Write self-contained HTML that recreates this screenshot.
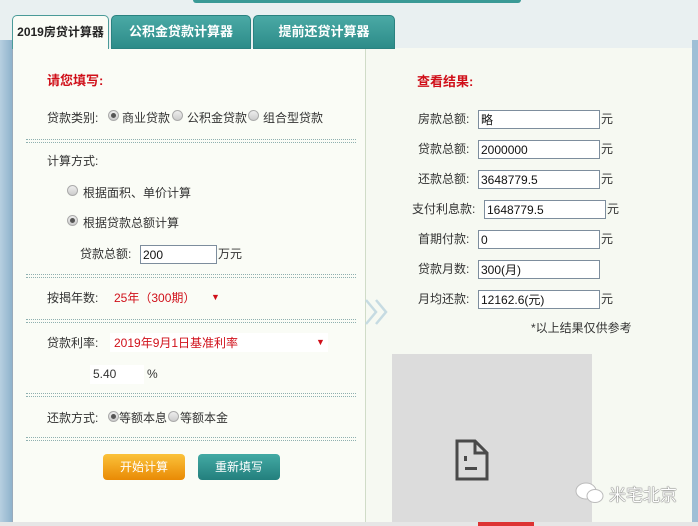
<!DOCTYPE html>
<html><head><meta charset="utf-8"><style>
*{margin:0;padding:0;box-sizing:border-box}
body{width:698px;height:526px;overflow:hidden;background:#e9f0f1;font-family:"Liberation Sans","Noto Sans CJK SC",sans-serif;font-size:12px;color:#333;position:relative}
.a{position:absolute}
.tab{position:absolute;top:15px;height:34px;border-radius:5px 5px 0 0;text-align:center;line-height:32px;font-weight:bold;font-size:13px}
.t2{background:linear-gradient(#4aa9a5,#2d8c89);color:#fff;border:1px solid #2a8280}
.lbl{position:absolute;white-space:nowrap;line-height:14px}
.dot{position:absolute;left:26px;width:330px;height:4px;border-top:1px dotted #8fb0b0;border-bottom:1px dotted #8fb0b0}
.rad{position:absolute;width:11px;height:11px;border-radius:50%;border:1px solid #aaa;background:linear-gradient(#eee,#ccc)}
.rad.on::after{content:"";position:absolute;left:2px;top:2px;width:5px;height:5px;border-radius:50%;background:#555}
.in{position:absolute;height:19px;border:1px solid #7d8d9d;background:#fff;padding-left:2px;padding-top:2px;line-height:14px;color:#111}
.red{color:#d0101a}
</style></head><body>
<div class="a" style="left:193px;top:0;width:328px;height:3px;background:#3a9a96;border-radius:0 0 4px 4px"></div>
<div class="a" style="left:0;top:40px;width:12px;height:486px;background:linear-gradient(90deg,#b7cfe0,#8fb3cc)"></div>
<div class="a" style="left:692px;top:40px;width:6px;height:486px;background:#9fbfd6"></div>
<div class="a" style="left:12px;top:48px;width:353px;height:474px;background:#fafcf6;border-left:1px solid #9ab"></div>
<div class="a" style="left:365px;top:48px;width:327px;height:474px;background:#f6f9f2;border-left:1px solid #d0dcc8"></div>
<div class="tab" style="left:12px;width:97px;background:#fafcf6;border:1px solid #4a9a98;border-bottom:none;color:#222;font-size:12px">2019房贷计算器</div>
<div class="tab t2" style="left:111px;width:140px">公积金贷款计算器</div>
<div class="tab t2" style="left:253px;width:142px">提前还贷计算器</div>

<div class="lbl red" style="left:47px;top:74px;font-weight:bold;font-size:13px">请您填写:</div>
<div class="lbl" style="left:47px;top:111px">贷款类别:</div>
<div class="rad on" style="left:108px;top:110px"></div><div class="lbl" style="left:122px;top:111px">商业贷款</div>
<div class="rad" style="left:172px;top:110px"></div><div class="lbl" style="left:187px;top:111px">公积金贷款</div>
<div class="rad" style="left:248px;top:110px"></div><div class="lbl" style="left:263px;top:111px">组合型贷款</div>
<div class="dot" style="top:139px"></div>
<div class="lbl" style="left:47px;top:154px">计算方式:</div>
<div class="rad" style="left:67px;top:185px"></div><div class="lbl" style="left:83px;top:186px">根据面积、单价计算</div>
<div class="rad on" style="left:67px;top:215px"></div><div class="lbl" style="left:83px;top:216px">根据贷款总额计算</div>
<div class="lbl" style="left:80px;top:247px">贷款总额:</div>
<div class="in" style="left:140px;top:245px;width:77px">200</div>
<div class="lbl" style="left:218px;top:247px">万元</div>
<div class="dot" style="top:274px"></div>
<div class="lbl" style="left:47px;top:291px">按揭年数:</div>
<div class="lbl red" style="left:114px;top:291px">25年（300期）</div>
<div class="lbl red" style="left:211px;top:290px;font-size:9px">▼</div>
<div class="dot" style="top:319px"></div>
<div class="lbl" style="left:47px;top:336px">贷款利率:</div>
<div class="a" style="left:110px;top:333px;width:218px;height:19px;background:#fff"></div>
<div class="lbl red" style="left:114px;top:336px">2019年9月1日基准利率</div>
<div class="lbl red" style="left:316px;top:335px;font-size:9px">▼</div>
<div class="a" style="left:90px;top:365px;width:54px;height:19px;background:#fff"></div>
<div class="lbl" style="left:93px;top:367px">5.40</div>
<div class="lbl" style="left:147px;top:367px">%</div>
<div class="dot" style="top:393px"></div>
<div class="lbl" style="left:47px;top:411px">还款方式:</div>
<div class="rad on" style="left:108px;top:411px"></div><div class="lbl" style="left:119px;top:411px">等额本息</div>
<div class="rad" style="left:168px;top:411px"></div><div class="lbl" style="left:180px;top:411px">等额本金</div>
<div class="dot" style="top:437px"></div>
<div class="a" style="left:103px;top:454px;width:82px;height:26px;border-radius:4px;background:linear-gradient(#fbc23a,#e98a05);color:#fff;text-align:center;line-height:26px">开始计算</div>
<div class="a" style="left:198px;top:454px;width:82px;height:26px;border-radius:4px;background:linear-gradient(#43aaa4,#237f7d);color:#fff;text-align:center;line-height:26px">重新填写</div>

<svg class="a" style="left:362px;top:297px" width="32" height="30"><path d="M4 3 L14 15 L4 27 M14 3 L24 15 L14 27" fill="none" stroke="#c6dbe2" stroke-width="2.5"/></svg>

<div class="lbl red" style="left:417px;top:75px;font-weight:bold;font-size:13px">查看结果:</div>
<div class="lbl" style="left:418px;top:112px">房款总额:</div><div class="in" style="left:478px;top:110px;width:122px">略</div><div class="lbl" style="left:601px;top:112px">元</div>
<div class="lbl" style="left:418px;top:142px">贷款总额:</div><div class="in" style="left:478px;top:140px;width:122px">2000000</div><div class="lbl" style="left:601px;top:142px">元</div>
<div class="lbl" style="left:418px;top:172px">还款总额:</div><div class="in" style="left:478px;top:170px;width:122px">3648779.5</div><div class="lbl" style="left:601px;top:172px">元</div>
<div class="lbl" style="left:412px;top:202px">支付利息款:</div><div class="in" style="left:484px;top:200px;width:122px">1648779.5</div><div class="lbl" style="left:607px;top:202px">元</div>
<div class="lbl" style="left:418px;top:232px">首期付款:</div><div class="in" style="left:478px;top:230px;width:122px">0</div><div class="lbl" style="left:601px;top:232px">元</div>
<div class="lbl" style="left:418px;top:262px">贷款月数:</div><div class="in" style="left:478px;top:260px;width:122px">300(月)</div>
<div class="lbl" style="left:418px;top:292px">月均还款:</div><div class="in" style="left:478px;top:290px;width:122px">12162.6(元)</div><div class="lbl" style="left:601px;top:292px">元</div>
<div class="lbl" style="left:531px;top:321px">*以上结果仅供参考</div>

<div class="a" style="left:392px;top:354px;width:200px;height:172px;background:#dcdcdc"></div>
<svg class="a" style="left:455px;top:439px" width="36" height="44"><path d="M2 2 H20 L32 14 V40 H2 Z M20 2 V14 H32" fill="none" stroke="#4a4a4a" stroke-width="3"/><rect x="9" y="17" width="3" height="5" fill="#4a4a4a"/><rect x="10" y="28" width="12" height="3" fill="#4a4a4a"/></svg>
<svg class="a" style="left:574px;top:481px" width="34" height="24"><ellipse cx="12" cy="10" rx="10" ry="8" fill="#fff" stroke="#bbb"/><ellipse cx="21" cy="15" rx="8" ry="6.5" fill="#fff" stroke="#bbb"/></svg>
<div class="lbl" style="left:609px;top:486px;font-size:17px;line-height:20px;color:#fff;text-shadow:0 0 1px #444,0 0 1px #444">米宅北京</div>
<div class="a" style="left:0;top:522px;width:698px;height:4px;background:#e6e6e6"></div>
<div class="a" style="left:478px;top:522px;width:56px;height:4px;background:#d33"></div>
</body></html>
